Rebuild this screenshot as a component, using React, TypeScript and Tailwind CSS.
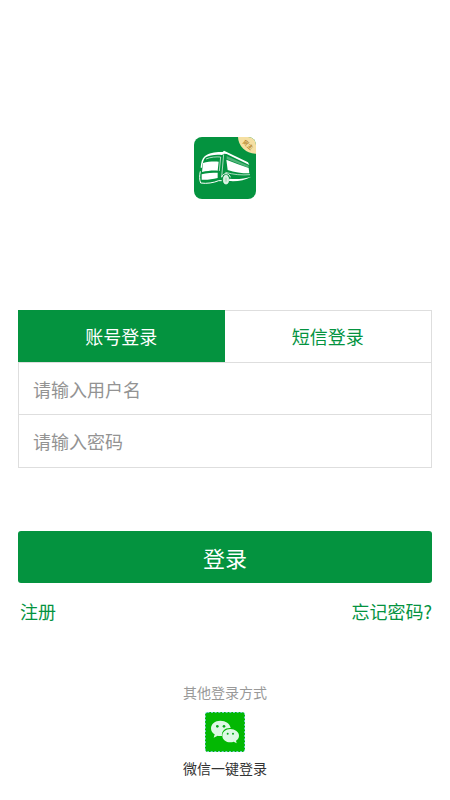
import { useState } from "react";

function BusLogo() {
  return (
    <svg viewBox="0 0 186 186" className="size-[62px]" role="img" aria-label="货主">
      <defs>
        <clipPath id="logo-shape">
          <rect width="186" height="186" rx="24" />
        </clipPath>
      </defs>
      <g clipPath="url(#logo-shape)">
        <rect width="186" height="186" fill="#04933f" />
        <circle cx="184" cy="-2" r="52" fill="#f5dfa2" />
      </g>
      <text
        x="162"
        y="30"
        fontSize="18"
        textAnchor="middle"
        fill="#b07f28"
        transform="rotate(42 162 23)"
        className="font-['Noto_Sans_CJK_SC',sans-serif] font-medium"
      >
        货主
      </text>
      {/* roof */}
      <path
        d="M20 92C21 76 24 65 32 58C45 47 68 44 86 45L90 41L98 45L162 76L166 84L98 51L90 50L84 54C66 52 46 54 35 61C28 67 26 78 24 92Z"
        fill="#fff"
      />
      <path d="M36 66C50 60 66 59 80 60" fill="none" stroke="#fff" strokeWidth="2" />
      {/* windscreen and bumper */}
      <path d="M27 78C42 74 57 73 74 74L71 101C54 100 39 102 24 105Z" fill="#fff" />
      <path d="M80 60L76 102M89 52L83 120" fill="none" stroke="#fff" strokeWidth="2" />
      <path d="M23 112C38 108 55 107 71 107V123C54 127 38 129 23 128Z" fill="#fff" />
      <path
        d="M19 103C16 116 16 129 20 138C38 141 60 137 74 131L83 131"
        fill="none"
        stroke="#fff"
        strokeWidth="3"
      />
      {/* side */}
      <path d="M98 57L164 86V92L98 66Z" fill="#fff" opacity="0.3" />
      <path d="M97 68C119 77 141 85 164 93L166 109C142 109 121 106 101 99Z" fill="#fff" />
      <path d="M94 106C119 113 143 115 168 113" fill="none" stroke="#fff" strokeWidth="2" />
      <path d="M83 121C86 106 106 107 109 121" fill="none" stroke="#fff" strokeWidth="3" />
      <ellipse cx="96" cy="128" rx="8" ry="13" fill="#d8efe0" stroke="#fff" strokeWidth="2" />
      <path d="M96 122V134" stroke="#6fbf8f" strokeWidth="2" />
      <path d="M106 125C128 128 150 125 172 119C152 130 128 134 105 132Z" fill="#fff" />
    </svg>
  );
}

function WechatIcon() {
  return (
    <svg viewBox="0 0 120 120" className="size-10" aria-hidden="true">
      <rect width="120" height="120" rx="10" fill="#03b803" />
      <rect x="1" y="1" width="118" height="118" rx="6" fill="none" stroke="#8fd3f5" strokeWidth="3" strokeDasharray="6 5" />
      <path
        d="M46 26C30 26 18 36 18 49C18 57 22 63 29 67L26 77L38 71C41 72 46 72 51 72C49 57 60 47 77 48C75 35 62 26 46 26Z"
        fill="#def9e5"
      />
      <path
        d="M76 51C62 51 52 60 52 71C52 83 63 91 76 91C80 91 83 90 86 89L95 94L93 86C99 82 102 77 102 71C102 60 90 51 76 51Z"
        fill="#def9e5"
      />
      <g fill="#08a81b">
        <circle cx="37" cy="43" r="4" />
        <circle cx="57" cy="43" r="4" />
        <circle cx="68" cy="65" r="3" />
        <circle cx="84" cy="65" r="3" />
      </g>
    </svg>
  );
}

const tabs = ["账号登录", "短信登录"];

export default function App() {
  const [active, setActive] = useState(0);

  return (
    <main className="min-h-screen bg-white px-[18px] pt-[137px] pb-5 font-['Noto_Sans_CJK_SC',sans-serif] text-[#04933f]">
      <div className="flex justify-center">
        <BusLogo />
      </div>

      <form className="mt-[111px]" onSubmit={(e) => e.preventDefault()}>
        <div className="divide-y divide-[#dedede] border border-[#dedede]">
          <div className="-mt-px -ml-px grid grid-cols-2">
            {tabs.map((tab, i) => (
              <button
                key={tab}
                type="button"
                onClick={() => setActive(i)}
                className={
                  i === active
                    ? "h-[52px] bg-[#04933f] text-lg text-white"
                    : "h-[52px] text-lg"
                }
              >
                {tab}
              </button>
            ))}
          </div>
          <input
            type="text"
            aria-label="用户名"
            placeholder="请输入用户名"
            className="block h-[52px] w-full px-[14px] text-lg text-gray-800 outline-none placeholder:text-[#939393]"
          />
          <input
            type="password"
            aria-label="密码"
            placeholder="请输入密码"
            className="block h-[52px] w-full px-[14px] text-lg text-gray-800 outline-none placeholder:text-[#939393]"
          />
        </div>

        <button
          type="submit"
          className="mt-[63px] h-[52px] w-full rounded-[3px] bg-[#04933f] text-[22px] text-white"
        >
          登录
        </button>
      </form>

      <div className="mt-[14px] flex justify-between pl-[2px] text-lg">
        <a href="#register">注册</a>
        <a href="#forgot">忘记密码?</a>
      </div>

      <div className="mt-[57px] flex flex-col items-center text-sm">
        <p className="text-[#999]">其他登录方式</p>
        <button type="button" className="mt-[10px] flex flex-col items-center gap-[6px] text-[#333]">
          <WechatIcon />
          微信一键登录
        </button>
      </div>
    </main>
  );
}
